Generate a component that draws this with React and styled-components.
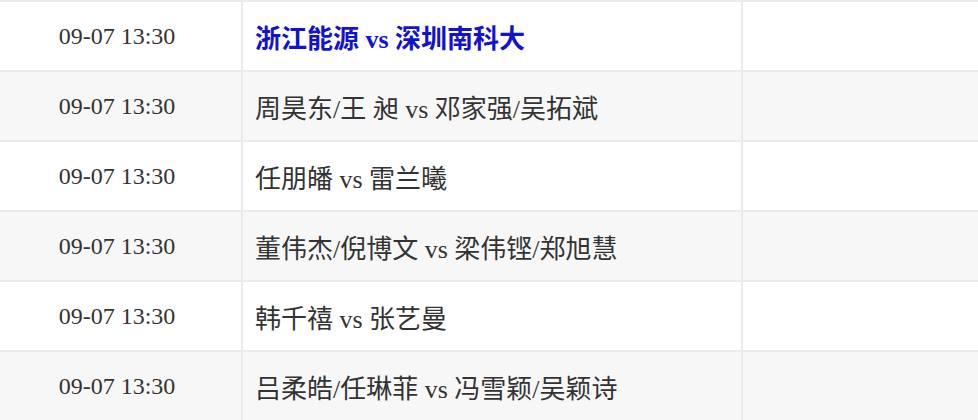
import styled, { createGlobalStyle } from "styled-components";

const GlobalStyle = createGlobalStyle`
	body {
		margin: 0;
		background: #ffffff;
		font-family: "Liberation Serif", "Noto Sans CJK SC", serif;
	}
`;

const Board = styled.div`
	width: 978px;
	border-top: 2px solid #ebebef;
`;

const Row = styled.div`
	display: grid;
	grid-template-columns: 243px 500px 1fr;
	height: 70px;
	box-sizing: border-box;
	border-bottom: 2px solid #ebebef;
	background: ${(p) => (p.$striped ? "#f7f7f7" : "#ffffff")};
`;

const Cell = styled.div`
	display: flex;
	align-items: center;
	box-sizing: border-box;
	border-right: 2px solid #ebebef;
	&:last-child {
		border-right: none;
	}
`;

const TimeCell = styled(Cell)`
	justify-content: center;
	padding-right: 7px;
	font-size: 24px;
	color: #333333;
`;

const MatchCell = styled(Cell)`
	padding-left: 12px;
	font-size: 26px;
	white-space: pre;
	color: ${(p) => (p.$live ? "#1212cf" : "#333333")};
	font-weight: ${(p) => (p.$live ? 700 : 400)};
`;

const matches = [
	{ time: "09-07 13:30", title: "浙江能源 vs 深圳南科大", live: true },
	{ time: "09-07 13:30", title: "周昊东/王 昶 vs 邓家强/吴拓斌" },
	{ time: "09-07 13:30", title: "任朋皤 vs 雷兰曦" },
	{ time: "09-07 13:30", title: "董伟杰/倪博文 vs 梁伟铿/郑旭慧" },
	{ time: "09-07 13:30", title: "韩千禧 vs 张艺曼" },
	{ time: "09-07 13:30", title: "吕柔皓/任琳菲 vs 冯雪颖/吴颖诗" },
];

export default function App() {
	return (
		<>
			<GlobalStyle />
			<Board>
				{matches.map((m, i) => (
					<Row key={i} $striped={i % 2 === 1}>
						<TimeCell>{m.time}</TimeCell>
						<MatchCell $live={m.live}>{m.title}</MatchCell>
						<Cell />
					</Row>
				))}
			</Board>
		</>
	);
}
